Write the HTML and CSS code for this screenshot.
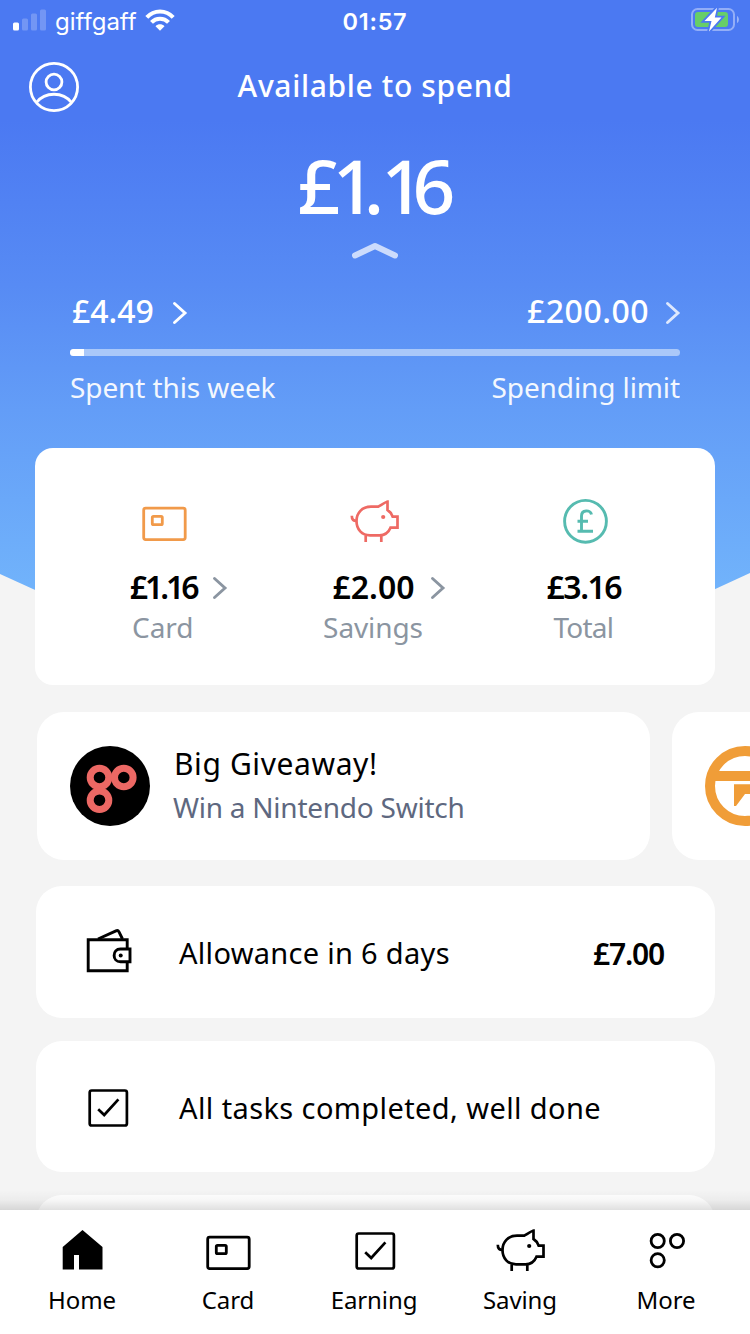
FILE: index.html
```html
<!DOCTYPE html>
<html lang="en">
<head>
<meta charset="utf-8">
<title>Home</title>
<link rel="stylesheet" href="styles.css">
</head>
<body>
<svg class="sprite" aria-hidden="true">
  <symbol id="card" viewBox="0 0 48 48"><g fill="none" stroke="currentColor" stroke-width="2.8"><rect x="3.700" y="11.2" width="41.500" height="31.4" rx="2"/><rect x="12.300" y="19.3" width="10" height="8.4" rx="1.2"/></g></symbol>
  <symbol id="pig" viewBox="-2 0 50 48"><g fill="none" stroke="currentColor" stroke-width="2.7"><path d="M27.3 9.7H20C11 9.7 5.5 16 5.5 24C5.5 32.500 11 38.300 19 38.300H28.500C34 38.300 37.500 35.500 39.500 30.700H46.500V19.700H41.700C40.500 16.500 39 14.500 36.500 13V4.500C35.500 4.500 31 7.500 27.300 9.700Z"/><path d="M.8 18.800C.8 22 2.500 24 5.500 24M14.700 38.500V45M30.300 38.500V45"/></g><circle cx="32.200" cy="20" r="2.100" fill="currentColor"/></symbol>
  <symbol id="check" viewBox="0 0 48 48"><g fill="none" stroke="currentColor" stroke-width="2.7"><rect x="6.700" y="7.500" width="37.200" height="35" rx="2"/><path d="M15.200 26.200L21.200 32L35.400 16.400"/></g></symbol>
  <symbol id="chevron" viewBox="0 0 16 24"><path d="M2.500 2.500L13 12L2.500 21.500" fill="none" stroke="currentColor" stroke-width="2.900" stroke-linecap="round"/></symbol>
</svg>
<div class="screen">
  <header class="hero">
    <div class="status">
      <div class="carrier">
        <svg width="34" height="22" viewBox="0 0 34 22" fill="#fff"><rect x="0" y="13.500" width="6" height="8" rx="1.500"/><g opacity=".22"><rect x="9" y="9.500" width="6" height="12" rx="1.500"/><rect x="18" y="4.500" width="6" height="17" rx="1.500"/><rect x="27" y=".5" width="6" height="21" rx="1.500"/></g></svg>
        <span class="network">giffgaff</span>
        <svg width="30" height="22" viewBox="0 0 30 22"><g fill="none" stroke="#fff" stroke-width="4"><path d="M1.800 8.300C9 .4 21 .4 28.200 8.300"/><path d="M6.500 13.300C11 8.500 19 8.500 23.500 13.300"/></g><path d="M10.500 17.200C13 14.600 17 14.600 19.500 17.200L15 21.700Z" fill="#fff"/></svg>
      </div>
      <time class="clock">01:57</time>
      <svg class="battery" width="48" height="24" viewBox="0 0 48 24"><rect x="1" y="1" width="42" height="21" rx="5.500" fill="none" stroke="#fff" stroke-opacity=".4" stroke-width="2"/><path d="M46 8C48.500 9 48.500 14 46 15Z" fill="#fff" fill-opacity=".45"/><rect x="4" y="4" width="33" height="15" rx="3" fill="#67ce67"/><path d="M26-.2L13.500 13H20.500L18 23.500L30.500 9.500H23.800Z" fill="#fff" stroke="#4b79f2" stroke-width="3.600" paint-order="stroke"/></svg>
    </div>
    <div class="titlebar">
      <svg class="avatar" width="50" height="50" viewBox="0 0 50 50" fill="none" stroke="#fff" stroke-width="2.800"><circle cx="25" cy="25" r="23.600"/><circle cx="25" cy="20" r="7.900"/><path d="M7.500 40.500C16 29.500 34 29.500 42.500 40.500"/></svg>
      <h1 class="title">Available to spend</h1>
    </div>
    <div class="balance"><span class="pound">£</span><span class="one">1</span>.<span class="one">1</span>6</div>
    <svg class="collapse" width="46" height="17" viewBox="0 0 46 17"><path d="M3 13.500L23 4L43 13.500" fill="none" stroke="#fff" stroke-opacity=".7" stroke-width="6" stroke-linecap="round" stroke-linejoin="round"/></svg>
    <div class="limits">
      <div class="limit-row amounts">
        <span class="spent">£4.49<svg class="chev"><use href="#chevron"/></svg></span>
        <span class="cap">£200.00<svg class="chev faded"><use href="#chevron"/></svg></span>
      </div>
      <div class="track"><div class="fill" style="width:2.25%"></div></div>
      <div class="limit-row captions"><span>Spent this week</span><span>Spending limit</span></div>
    </div>
  </header>

  <main class="content">
    <section class="summary">
      <div class="account">
        <svg class="icon orange"><use href="#card"/></svg>
        <div class="sum"><span class="narrow">£1.16</span><svg class="chev"><use href="#chevron"/></svg></div>
        <div class="kind">Card</div>
      </div>
      <div class="account">
        <svg class="icon pig red"><use href="#pig"/></svg>
        <div class="sum"><span>£2.00</span><svg class="chev"><use href="#chevron"/></svg></div>
        <div class="kind">Savings</div>
      </div>
      <div class="account">
        <svg class="icon teal" viewBox="0 0 48 48" fill="none" stroke="currentColor" stroke-width="2.900"><circle cx="24.500" cy="24.300" r="20.900"/><path d="M30.500 17.500C29.500 12.500 20.500 12.500 20.500 19V34M16.500 24.200H27M16.500 34.200H32"/></svg>
        <div class="sum"><span class="semi">£3.16</span></div>
        <div class="kind total">Total</div>
      </div>
    </section>

    <section class="promos">
      <article class="promo">
        <svg class="logo" viewBox="0 0 80 80"><circle cx="40" cy="40" r="40"/><g fill="none" stroke="#ec6864" stroke-width="7"><circle cx="29.500" cy="31.500" r="9.300"/><circle cx="53.800" cy="31.500" r="9.300"/><circle cx="29.500" cy="54.200" r="9.300"/></g></svg>
        <div>
          <h2 class="promo-title">Big Giveaway!</h2>
          <p class="promo-text">Win a Nintendo Switch</p>
        </div>
      </article>
      <article class="promo">
        <svg class="logo" viewBox="0 0 80 80"><circle cx="40" cy="40" r="35" fill="none" stroke="#f09d38" stroke-width="10"/><path d="M6 25H74V35H6ZM29 38.300H52V48H40L31 60H29Z" fill="#f09d38"/></svg>
      </article>
    </section>

    <section class="row">
      <svg class="icon" viewBox="0 0 48 48" fill="none" stroke="currentColor" stroke-width="2.900"><path d="M43.200 20V11.800H4.200V42.800H43.200V34"/><path d="M14 11L32 2.900Q34 2 35 3.900L38.500 11"/><path d="M46 21V33.800H36.500C28 33.800 28 21 36.500 21Z"/><circle cx="36.700" cy="27.400" r="2" fill="currentColor" stroke="none"/></svg>
      <span class="allowance">Allowance in 6 days</span>
      <strong class="pay">£7.00</strong>
    </section>
    <section class="row">
      <svg class="icon" viewBox="1 0 48 48"><use href="#check" width="48" height="48"/></svg>
      <span class="tasks">All tasks completed, well done</span>
    </section>
    <section class="row"></section>
  </main>

  <nav class="tabs">
    <a class="tab"><svg class="icon" viewBox="0 0 48 48"><path d="M4.700 43.500V21L24.500 4L44.500 21V43.500H21V29H16V43.500Z" fill="currentColor"/></svg>Home</a>
    <a class="tab"><svg class="icon"><use href="#card"/></svg>Card</a>
    <a class="tab"><svg class="icon"><use href="#check"/></svg>Earning</a>
    <a class="tab"><svg class="icon pig"><use href="#pig"/></svg>Saving</a>
    <a class="tab"><svg class="icon" viewBox="0 0 48 48" fill="none" stroke="currentColor" stroke-width="2.800"><circle cx="15.700" cy="15" r="6.600"/><circle cx="35" cy="15" r="6.600"/><circle cx="15.700" cy="34.300" r="6.600"/></svg>More</a>
  </nav>
</div>
</body>
</html>
```
FILE: styles.css
```css
* { box-sizing: border-box; margin: 0; }

body {
  background: #f4f4f4;
  color: #000;
  font-family: "Noto Sans", sans-serif;
}

svg { display: block; flex: none; }
.sprite { position: absolute; width: 0; height: 0; }

.screen {
  display: grid;
  grid-template: 1210px 124px / 750px;
  height: 1334px;
  overflow: hidden;
  background: #f4f4f4;
  position: relative;
  isolation: isolate;
}

/* angled blue backdrop behind the header and the summary card */
.screen::before {
  content: "";
  position: absolute;
  z-index: -1;
  inset: 0 0 auto;
  height: 660px;
  background: linear-gradient(#4b79f2 120px, #578bf4 285px, #639df7 410px, #71b3fb 590px);
  clip-path: polygon(0 0, 100% 0, 100% 573px, 561px 660px, 189px 660px, 0 574px);
}

.screen > * { grid-column: 1; }
.hero { grid-row: 1; height: 448px; color: #fff; }
.content { grid-row: 1; margin-top: 448px; overflow: hidden; }

.status {
  height: 40px;
  display: grid;
  grid-template-columns: 1fr auto 1fr;
  align-items: center;
  padding: 0 11px 0 13px;
  font-family: Inter, sans-serif;
  font-size: 24px;
}
.carrier { display: flex; align-items: center; gap: 8px; }
.carrier svg { margin-top: -1px; }
.network { padding-top: 2px; letter-spacing: 0; }
.clock { padding-top: 2px; margin-left: -2px; font-weight: 600; font-size: 23.500px; letter-spacing: .7px; }
.battery { justify-self: end; }

.titlebar {
  height: 89px;
  padding: 0 29px;
  display: grid;
  grid-template-columns: 50px 1fr 50px;
  align-items: center;
}
.avatar { margin-top: 5px; }
.title { text-align: center; font-size: 30px; font-weight: 500; letter-spacing: .65px; padding-top: 1px; }

.balance {
  height: 113px;
  line-height: 113px;
  text-align: center;
  font-size: 75px;
  font-weight: 500;
  letter-spacing: -3px;
}
.balance .pound { letter-spacing: -8px; }
.balance .one { letter-spacing: -11.500px; }
.collapse { margin: 0 auto; }

.limits { margin: 29px 70px 0; }
.limit-row { display: flex; justify-content: space-between; }
.amounts { height: 45px; line-height: 47px; font-size: 32px; font-weight: 500; }
.spent, .cap { display: flex; align-items: center; gap: 18px; }
.spent { margin-left: 2px; }
.cap { letter-spacing: .5px; gap: 16px; margin-right: -1px; }
.chev { width: 16px; height: 24px; margin-top: 4px; }
.faded { opacity: .8; }
.track { height: 7px; margin-top: 16px; border-radius: 4px; overflow: hidden; background: #aac8f9; }
.fill { height: 100%; background: #fff; }
.captions { margin-top: 11px; height: 38px; line-height: 40px; font-size: 28px; letter-spacing: -.1px; opacity: .93; }

.summary {
  width: 680px;
  height: 237px;
  margin-left: 35px;
  padding: 49px 25px 0 24px;
  display: grid;
  grid-template-columns: repeat(3, 1fr);
  border-radius: 18px;
  background: #fff;
}
.account { display: flex; flex-direction: column; align-items: center; }
.icon { width: 48px; height: 48px; }
.icon.pig { width: 50px; }
.orange { color: #f19a4a; }
.red { color: #ee6a64; }
.teal { color: #56bbb0; }
.sum {
  align-self: stretch;
  display: grid;
  grid-template-columns: 1fr auto 1fr;
  align-items: center;
  column-gap: 15px;
  height: 43px;
  margin: 20px 0 0 -2px;
  font-size: 32px;
  font-weight: 600;
}
.sum span { grid-column: 2; letter-spacing: 0; }
.sum .narrow { letter-spacing: -3px; }
.sum .semi { letter-spacing: -1.500px; }
.sum .chev { color: #8b95a1; margin-top: 2px; }
.kind { margin-left: -3px; font-size: 28px; line-height: 38px; letter-spacing: -.1px; color: #8b95a1; }
.total { letter-spacing: -.8px; }

.promos { display: flex; gap: 22px; margin: 27px 0 0 37px; }
.promo {
  flex: none;
  width: 613px;
  height: 148px;
  padding: 0 33px;
  display: flex;
  align-items: center;
  gap: 24px;
  border-radius: 27px;
  background: #fff;
}
.logo { width: 80px; height: 80px; }
.promo-title { font-size: 30px; line-height: 44px; font-weight: 400; letter-spacing: .6px; margin-top: -3px; }
.promo-text { font-size: 28px; line-height: 42px; letter-spacing: -.25px; color: #5e6880; margin-left: -1px; }

.row {
  width: 679px;
  height: 132px;
  margin: 26px 0 0 36px;
  padding: 0 51px 0 48px;
  display: flex;
  align-items: center;
  border-radius: 26px;
  background: #fff;
  font-size: 29px;
}
.row + .row { height: 131px; margin-top: 23px; }
.row span { margin: 1px 0 0 47px; }
.allowance { letter-spacing: .3px; }
.tasks { letter-spacing: .4px; }
.pay { margin: 2px 0 0 auto; font-size: 30px; font-weight: 600; letter-spacing: -1.200px; }

.tabs {
  grid-row: 2;
  position: relative;
  display: grid;
  grid-template-columns: repeat(5, 146px);
  padding: 16px 0 0 9px;
  background: #fff;
}
/* shade cast upward over the scrolling content */
.tabs::before {
  content: "";
  position: absolute;
  inset: -20px 0 auto;
  height: 20px;
  background: linear-gradient(transparent, rgba(0, 0, 0, .03) 50%, rgba(0, 0, 0, .12));
}
.tab { display: flex; flex-direction: column; align-items: center; font-size: 24px; line-height: 34px; letter-spacing: -.1px; }
.tab .icon { margin-bottom: 9px; }
```
